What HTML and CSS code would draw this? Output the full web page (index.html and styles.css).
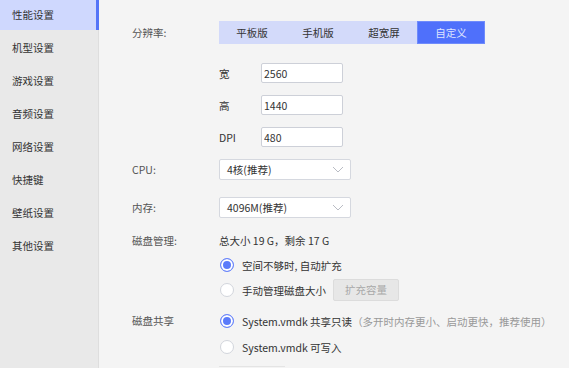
FILE: index.html
```html
<!DOCTYPE html>
<html lang="zh">

<head>
    <meta charset="UTF-8">
    <title>设置</title>
    <link rel="stylesheet" href="styles.css">
</head>

<body>
    <div class="app">
        <div class="sidebar">
            <div class="nav-item active">性能设置</div>
            <div class="nav-item">机型设置</div>
            <div class="nav-item">游戏设置</div>
            <div class="nav-item">音频设置</div>
            <div class="nav-item">网络设置</div>
            <div class="nav-item">快捷键</div>
            <div class="nav-item">壁纸设置</div>
            <div class="nav-item">其他设置</div>
        </div>

        <div class="main">
            <div class="row row-res">
                <div class="label">分辨率:</div>
                <div class="segments">
                    <div class="seg">平板版</div>
                    <div class="seg">手机版</div>
                    <div class="seg">超宽屏</div>
                    <div class="seg active">自定义</div>
                </div>
            </div>

            <div class="custom">
                <div class="field">
                    <span class="field-label">宽</span>
                    <input type="text" value="2560">
                </div>
                <div class="field">
                    <span class="field-label">高</span>
                    <input type="text" value="1440">
                </div>
                <div class="field">
                    <span class="field-label">DPI</span>
                    <input type="text" value="480">
                </div>
            </div>

            <div class="row row-cpu">
                <div class="label">CPU:</div>
                <div class="select">
                    <span>4核(推荐)</span>
                    <svg width="12" height="7" viewBox="0 0 12 7"><path d="M1 1l5 5 5-5" fill="none" stroke="#b9bcc4" stroke-width="1"/></svg>
                </div>
            </div>

            <div class="row row-mem">
                <div class="label">内存:</div>
                <div class="select">
                    <span>4096M(推荐)</span>
                    <svg width="12" height="7" viewBox="0 0 12 7"><path d="M1 1l5 5 5-5" fill="none" stroke="#b9bcc4" stroke-width="1"/></svg>
                </div>
            </div>

            <div class="row row-disk">
                <div class="label">磁盘管理:</div>
                <div class="options">
                    <div class="disk-size">总大小 19 G，剩余 17 G</div>
                    <label class="radio-line"><span class="radio checked"></span>空间不够时, 自动扩充</label>
                    <label class="radio-line"><span class="radio"></span>手动管理磁盘大小<span class="btn-disabled">扩充容量</span></label>
                </div>
            </div>

            <div class="row row-share">
                <div class="label">磁盘共享</div>
                <div class="options">
                    <label class="radio-line"><span class="radio checked"></span>System.vmdk 共享只读<span class="hint">（多开时内存更小、启动更快，推荐使用）</span></label>
                    <label class="radio-line"><span class="radio"></span>System.vmdk 可写入</label>
                </div>
            </div>

            <div class="row">
                <div class="label"></div>
                <div class="bottom-btn"></div>
            </div>
        </div>
    </div>
</body>

</html>
```

FILE: styles.css
```css
* {
    margin: 0;
    padding: 0;
    box-sizing: border-box;
    font-family: "Noto Sans CJK SC", "Noto Sans", sans-serif;
}
body {
    background-color: #f4f4f4;
    width: 569px;
    height: 368px;
    overflow: hidden;
    font-size: 10.5px;
    color: #333333;
}
.app {
    display: flex;
    height: 368px;
    overflow: hidden;
}
.sidebar {
    width: 99px;
    flex-shrink: 0;
    background-color: #e9e9e9;
    border-right: 1px solid #dedede;
}
.nav-item {
    height: 33px;
    line-height: 30px;
    padding-left: 12px;
    color: #333333;
}
.nav-item.active {
    height: 30px;
    margin-bottom: 3px;
    background-color: #cfd8fe;
    border-right: 3px solid #5474f8;
    margin-right: -1px;
}
.main {
    flex: 1;
    padding: 21px 0 0 33px;
    overflow: hidden;
}
.row {
    display: flex;
    align-items: flex-start;
}
.label {
    width: 87px;
    flex-shrink: 0;
    color: #555555;
    line-height: 16px;
}
.row-res .label {
    line-height: 23px;
}
.segments {
    display: flex;
    width: 266px;
    height: 23px;
    background-color: #d3dafa;
}
.seg {
    flex: 1;
    text-align: center;
    line-height: 23px;
    color: #333333;
}
.seg.active {
    background-color: #4f70fb;
    color: #dfe5ff;
    border: 1px solid #6f8bfb;
    line-height: 21px;
}
.custom {
    padding-left: 87px;
    margin-top: 19px;
}
.field {
    display: flex;
    align-items: center;
    height: 20px;
    margin-bottom: 12px;
}
.field-label {
    width: 42px;
    color: #333333;
}
.field input {
    width: 82px;
    height: 20px;
    border: 1px solid #cdd0d8;
    border-radius: 2px;
    background-color: #ffffff;
    padding-left: 2px;
    font-size: 10.5px;
    color: #333333;
    outline: none;
}
.row-cpu {
    margin-top: 1px;
}
.row-cpu .label,
.row-mem .label {
    line-height: 21px;
}
.row-mem {
    margin-top: 17px;
}
.select {
    width: 132px;
    height: 21px;
    border: 1px solid #d5d8df;
    border-radius: 2px;
    background-color: #ffffff;
    display: flex;
    align-items: center;
    justify-content: space-between;
    padding: 0 6px 0 7px;
}
.row-disk {
    margin-top: 15px;
}
.disk-size {
    line-height: 16px;
    margin-bottom: 5px;
}
.radio-line {
    display: flex;
    align-items: center;
    height: 22px;
    margin-bottom: 3px;
}
.radio {
    width: 14px;
    height: 14px;
    border-radius: 50%;
    border: 1px solid #d2d5dc;
    background-color: #ffffff;
    margin: 0 8px 0 1px;
}
.radio.checked {
    border: 1px solid #6b86fa;
    background-color: #5b7bfa;
    box-shadow: inset 0 0 0 2px #ffffff;
}
.btn-disabled {
    margin-left: 7px;
    width: 66px;
    height: 22px;
    line-height: 20px;
    text-align: center;
    background-color: #e7e7e7;
    border: 1px solid #dcdcdc;
    color: #a8a8a8;
    border-radius: 2px;
}
.row-share {
    margin-top: 6px;
}
.row-share .label {
    line-height: 22px;
}
.row-share .radio-line {
    margin-bottom: 4px;
}
.hint {
    color: #999999;
}
.bottom-btn {
    margin-top: 4px;
    width: 66px;
    height: 20px;
    border-top: 1px solid #e4e4e4;
}
```
